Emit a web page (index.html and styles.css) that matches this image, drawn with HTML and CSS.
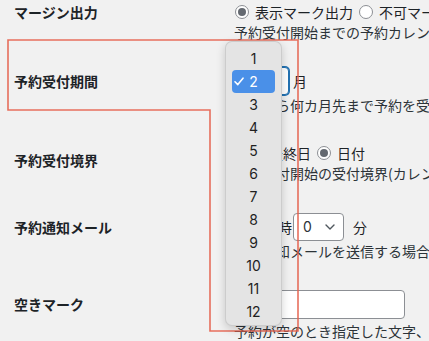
FILE: index.html
```html
<!DOCTYPE html>
<html lang="ja">
<head>
<meta charset="utf-8">
<title>予約設定</title>
<link rel="stylesheet" href="styles.css">
</head>
<body>
<div class="page">
  <div class="form">
    <div class="label">マージン出力</div>
    <div class="field">
      <div class="line">
        <label class="opt"><input type="radio" name="m" checked><span>表示マーク出力</span></label>
        <label class="opt"><input type="radio" name="m"><span>不可マーク出力</span></label>
      </div>
      <div class="desc">予約受付開始までの予約カレンダーにマークを表示します</div>
    </div>

    <div class="label label-ctl">予約受付期間</div>
    <div class="field">
      <div class="line line-ctl">
        <div class="select select-focus select-month"><span>2</span><svg class="chev" width="10" height="6" viewBox="0 0 10 6"><polyline points="1,1 5,5 9,1"/></svg></div>
        <span class="unit">月</span>
      </div>
      <div class="desc">本日から何カ月先まで予約を受け付けるかを指定します</div>
    </div>

    <div class="label label-mid">予約受付境界</div>
    <div class="field">
      <div class="line">
        <label class="opt"><input type="radio" name="b"><span>月最終日</span></label>
        <label class="opt"><input type="radio" name="b" checked><span>日付</span></label>
      </div>
      <div class="desc">予約受付開始の受付境界(カレンダー表示)を指定します</div>
    </div>

    <div class="label label-ctl">予約通知メール</div>
    <div class="field">
      <div class="line line-ctl">
        <div class="select select-hour"><span>9</span><svg class="chev" width="10" height="6" viewBox="0 0 10 6"><polyline points="1,1 5,5 9,1"/></svg></div>
        <span class="unit-h">時</span>
        <div class="select select-min"><span>0</span><svg class="chev" width="10" height="6" viewBox="0 0 10 6"><polyline points="1,1 5,5 9,1"/></svg></div>
        <span class="unit-m">分</span>
      </div>
      <div class="desc">予約通知メールを送信する場合の時刻を指定します</div>
    </div>

    <div class="label label-input">空きマーク</div>
    <div class="field">
      <div class="text-input"></div>
      <div class="desc desc-after-input">予約が空のとき指定した文字、記号を表示します</div>
    </div>
  </div>

  <svg class="annot" width="429" height="341" viewBox="0 0 429 341">
    <path d="M8,40 H298 V331 H210 V110 H8 Z"/>
  </svg>

  <div class="menu">
    <div class="item">1</div>
    <div class="item item-sel"><svg class="check" width="10" height="9" viewBox="0 0 10 9"><polyline points="1,4.8 3.8,7.6 9,1.2"/></svg>2</div>
    <div class="item">3</div>
    <div class="item">4</div>
    <div class="item">5</div>
    <div class="item">6</div>
    <div class="item">7</div>
    <div class="item">8</div>
    <div class="item">9</div>
    <div class="item">10</div>
    <div class="item">11</div>
    <div class="item">12</div>
  </div>
</div>
</body>
</html>
```

FILE: styles.css
```css
html, body {
  margin: 0;
  padding: 0;
}

body {
  background: #f1f1f1;
  font-family: "Noto Sans CJK JP", "Noto Sans", sans-serif;
  font-size: 14px;
  color: #1d2327;
}

.page {
  position: relative;
  width: 429px;
  height: 341px;
  overflow: hidden;
}

.form {
  display: grid;
  grid-template-columns: 234px 1fr;
  grid-template-rows: 65px 76px 70px 77px auto;
  padding-top: 2px;
}

.label {
  padding-left: 14px;
  font-weight: 700;
  line-height: 20px;
  white-space: nowrap;
}

.label-ctl {
  line-height: 28px;
}

.label-mid {
  padding-top: 6px;
  line-height: 22px;
}

.label-input {
  line-height: 29px;
}

.field {
  white-space: nowrap;
  min-width: 0;
}

.line {
  display: flex;
  align-items: center;
  height: 20px;
  line-height: 20px;
}

.line-ctl {
  height: 28px;
}

.opt {
  display: inline-flex;
  align-items: center;
  margin-right: 5px;
}

.opt input {
  appearance: none;
  -webkit-appearance: none;
  box-sizing: border-box;
  width: 14px;
  height: 14px;
  margin: 0 6px 0 1px;
  border: 1px solid #8c8f94;
  border-radius: 50%;
  background: #fff;
  position: relative;
}

.opt input:checked::after {
  content: "";
  position: absolute;
  left: 2px;
  top: 2px;
  width: 8px;
  height: 8px;
  border-radius: 50%;
  background: #646970;
}

.desc {
  line-height: 20px;
  color: #2c3338;
}

.desc-after-input {
  margin-top: 2px;
}

.select {
  box-sizing: border-box;
  height: 28px;
  display: flex;
  align-items: center;
  justify-content: space-between;
  padding: 0 8px 0 9px;
  background: #fff;
  border: 1px solid #8c8f94;
  border-radius: 4px;
  font-family: "Inter", "Noto Sans", sans-serif;
  font-size: 14px;
  color: #2c3338;
}

.select-focus {
  border-color: #2271b1;
  box-shadow: 0 0 0 1px #2271b1;
}

.select-month {
  width: 55px;
}

.select-hour {
  width: 40px;
}

.select-min {
  width: 51px;
  margin-left: 1px;
}

.chev {
  fill: none;
  stroke: #50575e;
  stroke-width: 1.4;
  stroke-linecap: round;
  stroke-linejoin: round;
}

.unit {
  margin-left: 4px;
}

.unit-h {
  margin-left: 4px;
}

.unit-m {
  margin-left: 9px;
}

.text-input {
  box-sizing: border-box;
  width: 171px;
  height: 29px;
  background: #fff;
  border: 1px solid #8c8f94;
  border-radius: 4px;
}

.annot {
  position: absolute;
  left: 0;
  top: 0;
  pointer-events: none;
  z-index: 1;
}

.annot path {
  fill: none;
  stroke: #e5604d;
  stroke-width: 1.6;
  stroke-opacity: 0.9;
}

.menu {
  position: absolute;
  z-index: 2;
  left: 225px;
  top: 41px;
  box-sizing: border-box;
  width: 57px;
  height: 285px;
  padding: 5px 6px 4px;
  background: #e4e4e4;
  border: 1px solid rgba(0, 0, 0, 0.1);
  border-radius: 7px;
  box-shadow: 0 3px 10px rgba(0, 0, 0, 0.18);
  font-family: "Inter", "Noto Sans", sans-serif;
  font-size: 14px;
  color: #1f1f1f;
}

.item {
  position: relative;
  height: 23px;
  line-height: 23px;
  text-align: center;
  border-radius: 4px;
}

.item-sel {
  background: #4a90e8;
  color: #fff;
}

.check {
  position: absolute;
  left: 2px;
  top: 7px;
  fill: none;
  stroke: #fff;
  stroke-width: 1.6;
  stroke-linecap: round;
  stroke-linejoin: round;
}
```
